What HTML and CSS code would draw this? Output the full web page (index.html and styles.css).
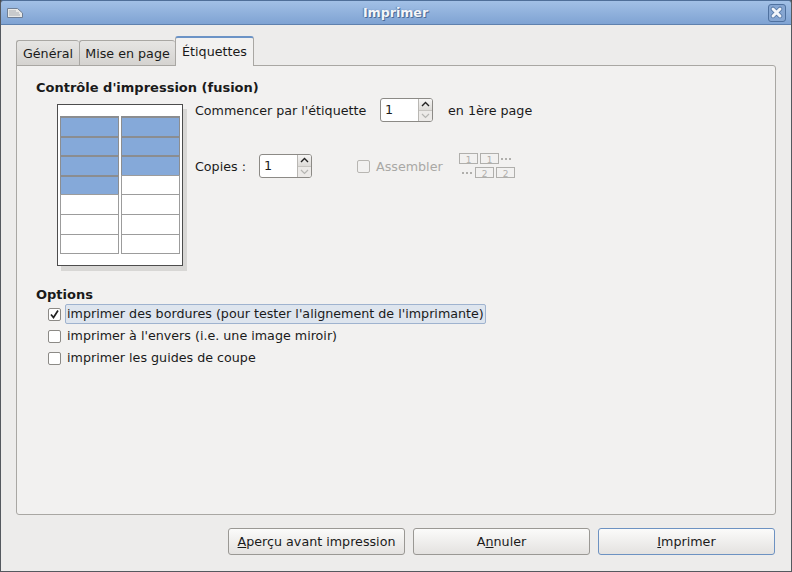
FILE: index.html
```html
<!DOCTYPE html>
<html lang="fr">
<head>
  <meta charset="UTF-8">
  <title>Imprimer</title>
  <link rel="stylesheet" href="styles.css">
</head>
<body>
  <div class="window">
    <div class="titlebar">
      <svg class="win-icon" width="16" height="10" viewBox="0 0 16 10">
        <path d="M0.5 0.5H10.5L15.5 5V9.5H0.5Z" fill="#e8e8e6" stroke="#6f7f95"/>
        <path d="M2 3H9M2 5H12M2 7H13" stroke="#a8adb3"/>
      </svg>
      <span class="win-title">Imprimer</span>
      <div class="win-close">
        <svg width="13" height="13" viewBox="0 0 13 13">
          <path d="M3 3L10 10M10 3L3 10" stroke="#4f719f" stroke-width="4.5" stroke-linecap="round"/>
          <path d="M3 3L10 10M10 3L3 10" stroke="#f2f5fa" stroke-width="3" stroke-linecap="round"/>
        </svg>
      </div>
    </div>

    <div class="content">
      <div class="tabs">
        <div class="tab">Général</div>
        <div class="tab tab-two">Mise en page</div>
        <div class="tab active">Étiquettes</div>
      </div>

      <div class="panel">
        <div class="section-title">Contrôle d'impression (fusion)</div>
        <div class="merge">
          <div class="sheet">
            <div class="lbl on"></div><div class="lbl on"></div>
            <div class="lbl on"></div><div class="lbl on"></div>
            <div class="lbl on"></div><div class="lbl on"></div>
            <div class="lbl on"></div><div class="lbl"></div>
            <div class="lbl"></div><div class="lbl"></div>
            <div class="lbl"></div><div class="lbl"></div>
            <div class="lbl"></div><div class="lbl"></div>
          </div>

          <div class="merge-fields">
            <div class="field-row">
              <span class="start-label">Commencer par l'étiquette</span>
              <div class="spin">
                <span class="spin-value">1</span>
                <div class="spin-btns">
                  <div class="spin-up"><svg width="9" height="6" viewBox="0 0 9 6"><path d="M1 5L4.5 1.5L8 5" fill="none" stroke="#222" stroke-width="1.4"/></svg></div>
                  <div class="spin-down"><svg width="9" height="6" viewBox="0 0 9 6"><path d="M1 1L4.5 4.5L8 1" fill="none" stroke="#b5b5b2" stroke-width="1.2"/></svg></div>
                </div>
              </div>
              <span class="after-spin">en 1ère page</span>
            </div>

            <div class="field-row copies-row">
              <span class="copies-label">Copies :</span>
              <div class="spin">
                <span class="spin-value">1</span>
                <div class="spin-btns">
                  <div class="spin-up"><svg width="9" height="6" viewBox="0 0 9 6"><path d="M1 5L4.5 1.5L8 5" fill="none" stroke="#222" stroke-width="1.4"/></svg></div>
                  <div class="spin-down"><svg width="9" height="6" viewBox="0 0 9 6"><path d="M1 1L4.5 4.5L8 1" fill="none" stroke="#b5b5b2" stroke-width="1.2"/></svg></div>
                </div>
              </div>
              <span class="check disabled collate-check"></span>
              <span class="collate-label">Assembler</span>
              <svg class="collate-icon" width="57" height="26" viewBox="0 0 57 26">
                <g fill="none" stroke="#b0afac">
                  <rect x="0.5" y="0.5" width="18" height="10"/>
                  <rect x="21.5" y="0.5" width="18" height="10"/>
                  <rect x="16.5" y="14.5" width="18" height="10"/>
                  <rect x="37.5" y="14.5" width="18" height="10"/>
                </g>
                <g fill="#b0afac">
                  <rect x="42" y="5" width="2" height="2"/><rect x="46" y="5" width="2" height="2"/><rect x="50" y="5" width="2" height="2"/>
                  <rect x="3" y="19" width="2" height="2"/><rect x="7" y="19" width="2" height="2"/><rect x="11" y="19" width="2" height="2"/>
                </g>
                <g class="collate-num" text-anchor="middle">
                  <text x="9.5" y="9.5">1</text>
                  <text x="30.5" y="9.5">1</text>
                  <text x="25.5" y="23.5">2</text>
                  <text x="46.5" y="23.5">2</text>
                </g>
              </svg>
            </div>
          </div>
        </div>

        <div class="section-title options-title">Options</div>
        <div class="options">
          <div class="option">
            <span class="check">
              <svg width="11" height="11" viewBox="0 0 11 11"><path d="M2 5.5L4.5 8.5L9 1.5" fill="none" stroke="#222" stroke-width="1.7"/></svg>
            </span>
            <span class="option-text focused">imprimer des bordures (pour tester l'alignement de l'imprimante)</span>
          </div>
          <div class="option">
            <span class="check"></span>
            <span class="option-text">imprimer à l'envers (i.e. une image miroir)</span>
          </div>
          <div class="option">
            <span class="check"></span>
            <span class="option-text">imprimer les guides de coupe</span>
          </div>
        </div>
      </div>

      <div class="actions">
        <button class="btn btn-preview" type="button"><u>A</u>perçu avant impression</button>
        <button class="btn" type="button">A<u>n</u>nuler</button>
        <button class="btn btn-default" type="button"><u>I</u>mprimer</button>
      </div>
    </div>
  </div>
</body>
</html>
```

FILE: styles.css
```css
html, body {
  margin: 0;
  padding: 0;
}

body {
  font-family: "DejaVu Sans", sans-serif;
  font-size: 12.7px;
  color: #1a1a1a;
  background: #4a4a4a;
}

.window {
  width: 792px;
  height: 572px;
  box-sizing: border-box;
  display: flex;
  flex-direction: column;
  border: 1px solid #55595f;
  border-top-color: #4f6f99;
  border-radius: 3px 3px 0 0;
  overflow: hidden;
}

.titlebar {
  height: 23px;
  flex: none;
  display: flex;
  align-items: center;
  justify-content: space-between;
  padding: 0 5px 0 6px;
  background: linear-gradient(#a2c0e6, #7fa3d3);
  border-bottom: 1px solid #5f81ae;
}

.win-title {
  font-size: 12.6px;
  font-weight: bold;
  color: #f4f6f9;
  text-shadow: 1px 1px 0 #4d6c96, -1px 0 1px #5d7ba3;
}

.win-close {
  box-sizing: border-box;
  width: 18px;
  height: 18px;
  display: flex;
  align-items: center;
  justify-content: center;
  border: 1px solid #4f719f;
  border-radius: 3px;
  background: #86a6d2;
}

.content {
  flex: 1;
  display: flex;
  flex-direction: column;
  padding: 11px 15px 0;
  background: #edeceb;
}

.tabs {
  display: flex;
  align-items: flex-end;
  height: 30px;
  position: relative;
  z-index: 1;
  margin-bottom: -1px;
}

.tab {
  box-sizing: border-box;
  width: 63px;
  height: 26px;
  line-height: 25px;
  text-align: center;
  background: linear-gradient(#e6e5e3, #d5d3d0);
  border: 1px solid #a9a7a3;
  border-radius: 3px 3px 0 0;
  border-right: 0;
}

.tab-two {
  width: 96px;
}

.tab.active {
  width: 79px;
  height: 30px;
  line-height: 27px;
  background: #f2f1f0;
  border-right: 1px solid #a9a7a3;
  border-top: 2px solid #6b93c6;
  border-bottom: 0;
}

.panel {
  box-sizing: border-box;
  width: 760px;
  height: 450px;
  flex: none;
  padding: 14px 19px 0;
  background: #f2f1f0;
  border: 1px solid #a9a7a3;
  border-radius: 0 3px 3px 3px;
}

.section-title {
  font-size: 13px;
  font-weight: bold;
  line-height: 16px;
}

.merge {
  display: flex;
  margin-left: 21px;
}

.sheet {
  box-sizing: border-box;
  width: 126px;
  height: 162px;
  flex: none;
  margin-top: 8px;
  padding: 11px 2px 0;
  display: grid;
  grid-template-columns: 59px 59px;
  grid-auto-rows: 19.6px;
  column-gap: 2px;
  align-content: start;
  background: #fff;
  border: 1px solid #4d4d4d;
  box-shadow: 4px 5px 0 #d8d7d5;
}

.lbl {
  box-sizing: border-box;
  height: 20.6px;
  background: #fff;
  border: 1px solid #9c9c9c;
}

.lbl.on {
  background: #85a9d9;
  border-color: #8b8d90;
  border-top-width: 2px;
}

.merge-fields {
  margin-left: 12px;
  margin-top: 2px;
}

.field-row {
  display: flex;
  align-items: center;
  height: 24px;
}

.copies-row {
  margin-top: 32px;
}

.start-label {
  width: 185px;
}

.copies-label {
  width: 64px;
}

.after-spin {
  margin-left: 15px;
}

.spin {
  box-sizing: border-box;
  width: 53px;
  height: 24px;
  display: flex;
  background: #fff;
  border: 1px solid #8c8a86;
  border-radius: 3px;
  overflow: hidden;
}

.spin-value {
  flex: 1;
  line-height: 22px;
  padding-left: 4px;
}

.spin-btns {
  width: 13px;
  display: flex;
  flex-direction: column;
  border-left: 1px solid #b9b7b3;
}

.spin-up,
.spin-down {
  flex: 1;
  display: flex;
  align-items: center;
  justify-content: center;
  background: linear-gradient(#f6f5f4, #dddbd8);
}

.spin-down {
  border-top: 1px solid #c6c4c0;
  background: #eceae8;
}

.check {
  box-sizing: border-box;
  width: 13px;
  height: 13px;
  flex: none;
  display: inline-flex;
  align-items: center;
  justify-content: center;
  background: #fff;
  border: 1px solid #8c8a86;
  border-radius: 2px;
}

.check.disabled {
  background: #f2f1f0;
  border-color: #b8b6b2;
}

.collate-check {
  margin-left: 45px;
}

.collate-label {
  margin-left: 6px;
  width: 83px;
  color: #a9a8a5;
}

.collate-icon {
  flex: none;
}

.collate-num {
  font-size: 9px;
  fill: #b0afac;
}

.options-title {
  margin-top: 21px;
}

.options {
  display: flex;
  flex-direction: column;
  margin-left: 12px;
}

.option {
  display: flex;
  align-items: center;
  height: 22px;
}

.option-text {
  box-sizing: border-box;
  height: 20px;
  line-height: 18px;
  padding: 0 1px;
  margin-left: 4px;
  border: 1px solid transparent;
}

.option-text.focused {
  background: #dee5ee;
  border-color: #9fb3cf;
  border-radius: 2px;
}

.actions {
  display: flex;
  justify-content: flex-end;
  gap: 8px;
  margin-top: 13px;
  margin-right: 1px;
}

.btn {
  box-sizing: border-box;
  width: 177px;
  height: 27px;
  padding: 0;
  font-family: inherit;
  font-size: 12.7px;
  color: #1a1a1a;
  background: linear-gradient(#fbfbfa, #e4e2e0);
  border: 1px solid #9a9894;
  border-radius: 3px;
}

.btn-default {
  border-color: #6d92c2;
}
```
